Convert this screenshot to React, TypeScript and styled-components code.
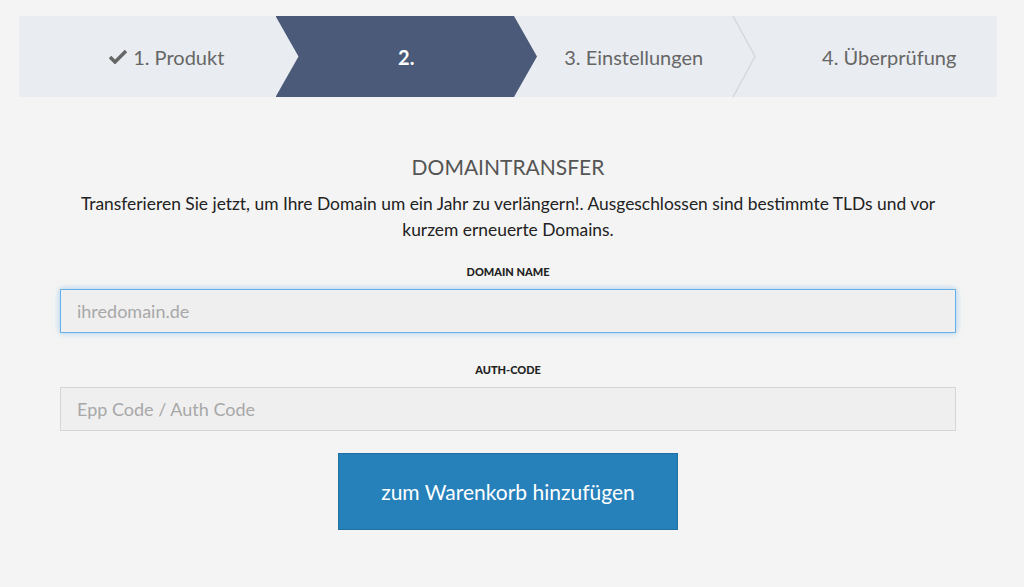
import * as React from 'react'
import styled, { createGlobalStyle } from 'styled-components'

const Global = createGlobalStyle`
  html, body { margin: 0; background: #f4f4f4; }
  body { font-family: "Lato", "Open Sans", sans-serif; }
`

const Page = styled.div`
  padding: 16px 27px 0 19px;
`

const Steps = styled.div`
  display: flex;
  height: 81px;
  background: #e9edf1;
`

const Step = styled.div<{ $active?: boolean; $pad?: number }>`
  flex: 1;
  position: relative;
  display: flex;
  align-items: center;
  justify-content: center;
  padding-left: ${p => p.$pad ?? 24}px;
  font-size: 20px;
  color: ${p => (p.$active ? '#fff' : '#666')};
  font-weight: ${p => (p.$active ? 700 : 400)};
  z-index: ${p => (p.$active ? 1 : 0)};
  &::before {
    content: '';
    position: absolute;
    top: 0;
    bottom: 0;
    left: 1px;
    right: -23px;
    display: ${p => (p.$active ? 'block' : 'none')};
    background: #4a5a78;
    clip-path: polygon(0 0, calc(100% - 23px) 0, 100% 50%, calc(100% - 23px) 100%, 0 100%, 23px 50%);
    z-index: -1;
  }
`

const Sep = styled.svg`
  position: absolute;
  left: -10px;
  top: 0;
  width: 24px;
  height: 81px;
`

const Label = styled.span`
  display: inline-flex;
  align-items: center;
  gap: 6px;
`

const Content = styled.div`
  padding: 57px 41px 0 41px;
  display: flex;
  flex-direction: column;
  align-items: center;
  text-align: center;
`

const Title = styled.h2`
  margin: 0 0 12px;
  font-size: 21px;
  font-weight: 400;
  color: #555;
`

const Text = styled.p`
  margin: 0 0 22px;
  font-size: 17.4px;
  line-height: 26px;
  color: #222;
  padding: 0 10px;
`

const FieldLabel = styled.div`
  font-size: 11px;
  font-weight: 900;
  color: #222;
  margin-bottom: 11px;
`

const Input = styled.input<{ $focus?: boolean }>`
  box-sizing: border-box;
  width: 100%;
  height: 44px;
  padding: 0 16px;
  font-family: inherit;
  font-size: 18px;
  background: #efefef;
  border: 1px solid ${p => (p.$focus ? '#66afe9' : '#d6d6d6')};
  box-shadow: ${p => (p.$focus ? '0 0 6px rgba(102,175,233,0.6)' : 'none')};
  outline: none;
  margin-bottom: 30px;
  &::placeholder { color: #a8a8a8; }
`

const Button = styled.button`
  margin-top: -8px;
  width: 340px;
  height: 77px;
  border: 1px solid #1f6fa3;
  background: #2681bb;
  color: #fff;
  font-family: inherit;
  font-size: 21px;
`

export default function App() {
  return (
    <Page>
      <Global />
      <Steps>
        <Step $pad={40}>
          <Label>
            <svg width="18" height="15" viewBox="0 0 18 15"><path d="M1 8l5 5L17 2" stroke="#666" strokeWidth="3.5" fill="none" /></svg>
            1. Produkt
          </Label>
        </Step>
        <Step $active>2.</Step>
        <Step $pad={12}>3. Einstellungen</Step>
        <Step $pad={40}>
          <Sep viewBox="0 0 24 81"><path d="M1 0L23 40.5L1 81" stroke="#d4d9de" strokeWidth="1.5" fill="none" /></Sep>
          4. Überprüfung
        </Step>
      </Steps>
      <Content>
        <Title>DOMAINTRANSFER</Title>
        <Text>Transferieren Sie jetzt, um Ihre Domain um ein Jahr zu verlängern!. Ausgeschlossen sind bestimmte TLDs und vor kurzem erneuerte Domains.</Text>
        <FieldLabel>DOMAIN NAME</FieldLabel>
        <Input $focus placeholder="ihredomain.de" />
        <FieldLabel>AUTH-CODE</FieldLabel>
        <Input placeholder="Epp Code / Auth Code" />
        <Button>zum Warenkorb hinzufügen</Button>
      </Content>
    </Page>
  )
}
